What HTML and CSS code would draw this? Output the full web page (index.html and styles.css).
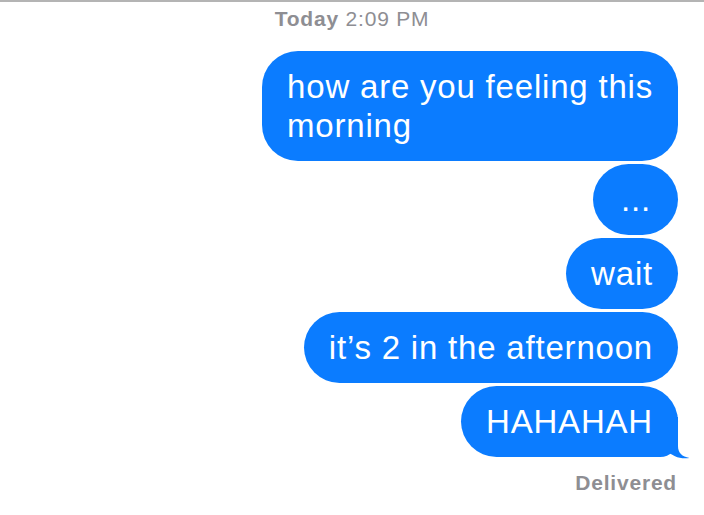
FILE: index.html
```html
<!DOCTYPE html>
<html lang="en">
<head>
    <meta charset="UTF-8">
    <meta name="viewport" content="width=device-width, initial-scale=1.0">
    <title>Messages</title>
    <link rel="stylesheet" href="styles.css">
</head>
<body>
    <div class="thread">
        <!-- Time stamp above the conversation -->
        <div class="timestamp"><b>Today</b> 2:09 PM</div>

        <div class="bubble">how are you feeling this<br>morning</div>
        <div class="bubble dots">...</div>
        <div class="bubble">wait</div>
        <div class="bubble">it’s 2 in the afternoon</div>
        <div class="bubble last">
            HAHAHAH
            <!-- Tail of the last sent message -->
            <svg class="tail" width="31" height="42" viewBox="0 0 31 42">
                <path d="M0 0 L19 0 L19 29 C19 36 23 39.5 30.5 41 C25 41.8 20 41 16 39.2 C13 37.6 10 35.5 6 35.5 C3 35.5 1 38 0 40 Z" fill="#0b7cff"/>
            </svg>
        </div>

        <div class="status">Delivered</div>
    </div>
</body>
</html>
```

FILE: styles.css
```css
body {
    margin: 0;
    padding: 0;
    background-color: #ffffff;
    font-family: "Liberation Sans", Arial, sans-serif;
    border-top: 2px solid #b4b4b4;
    min-height: 513px;
    box-sizing: border-box;
}

/* Message column, everything sent sits on the right */
.thread {
    display: flex;
    flex-direction: column;
    align-items: flex-end;
    padding: 5px 26px 0 0;
}

.timestamp {
    align-self: center;
    font-size: 21px;
    line-height: 24px;
    letter-spacing: 0.8px;
    color: #8e8e93;
    margin-bottom: 20px;
    padding-left: 26px;
}

.timestamp b {
    font-weight: bold;
}

/* Blue sent bubble */
.bubble {
    position: relative;
    background-color: #0b7cff;
    color: #ffffff;
    font-size: 33px;
    line-height: 39px;
    letter-spacing: 0.8px;
    padding: 16px 25px 16px 25px;
    border-radius: 36px;
    margin-bottom: 3px;
}

.bubble.dots {
    padding-left: 28px;
    padding-right: 27px;
}

.bubble.last {
    margin-bottom: 0;
    border-bottom-right-radius: 18px;
}

.tail {
    position: absolute;
    right: -12px;
    bottom: -2px;
}

.status {
    margin-top: 15px;
    font-size: 21px;
    line-height: 22px;
    letter-spacing: 0.8px;
    font-weight: bold;
    color: #8e8e93;
    padding-right: 1px;
}
```
